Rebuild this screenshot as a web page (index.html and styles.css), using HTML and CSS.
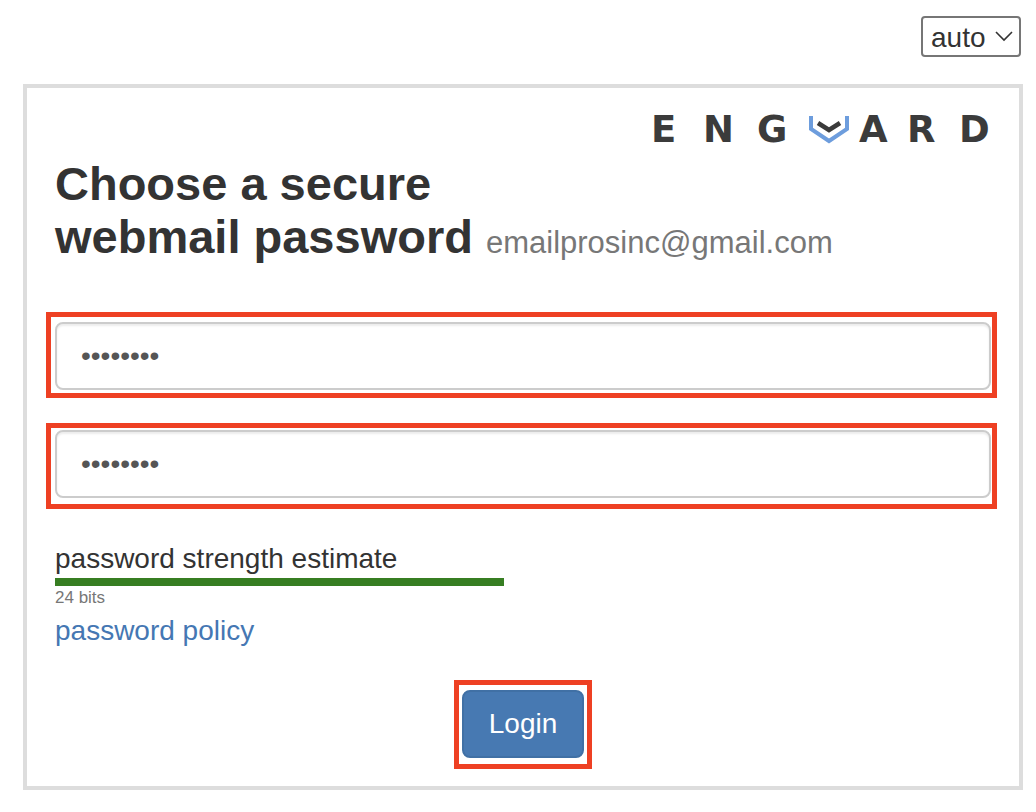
FILE: index.html
```html
<!DOCTYPE html>
<html lang="en">
<head>
<meta charset="utf-8">
<meta name="viewport" content="width=device-width, initial-scale=1">
<title>Choose a secure webmail password</title>
<link rel="stylesheet" href="styles.css">
</head>
<body>
<div class="topbar">
  <div class="picker">
    <select class="picker-select" aria-label="Language"><option>auto</option></select>
    <svg class="picker-arrow" width="18" height="12" viewBox="0 0 18 12" aria-hidden="true"><path d="M1 2 9 10 17 2" fill="none" stroke="#333" stroke-width="1.6"/></svg>
  </div>
</div>
<main class="panel">
  <div class="logo" role="img" aria-label="Engard">
    <span>E</span><span>N</span><span>G</span>
    <svg width="40" height="28" viewBox="0 0 40 28" aria-hidden="true">
      <path d="M2 0V13L20 25 38 13V0" fill="none" stroke="#6d9ddd" stroke-width="4"/>
      <path d="M9 7 20 14 31 7" fill="none" stroke="#3b3b3b" stroke-width="4.5"/>
    </svg>
    <span>A</span><span>R</span><span>D</span>
  </div>
  <h1 class="title">Choose a secure<br>webmail password <small class="account">emailprosinc@gmail.com</small></h1>
  <form class="form">
    <div class="mark mark-first"><input class="field" type="password" value="password" aria-label="Password"></div>
    <div class="mark mark-second"><input class="field" type="password" value="password" aria-label="Repeat password"></div>
    <div class="strength">
      <div class="strength-label">password strength estimate</div>
      <div class="strength-bar" style="width: 48%"></div>
      <div class="strength-bits">24 bits</div>
      <a class="policy" href="#">password policy</a>
    </div>
    <div class="mark mark-login"><button class="login" type="button">Login</button></div>
  </form>
</main>
</body>
</html>
```
FILE: styles.css
```css
* { box-sizing: border-box; }

body {
  margin: 0;
  padding: 16px 13px 22px 23px;
  background: #fff;
  color: #333;
  font: 28px/40px "Liberation Sans", Arial, sans-serif;
}

.topbar {
  display: flex;
  justify-content: flex-end;
  padding-right: 2px;
  margin-bottom: 27px;
}

.picker { position: relative; }

.picker-select {
  display: block;
  width: 100px;
  height: 41px;
  padding: 0 8px;
  border: 2px solid #767676;
  border-radius: 4px;
  background: #fff;
  color: #333;
  font: inherit;
  appearance: none;
}

.picker-arrow {
  position: absolute;
  top: 14px;
  right: 8px;
  pointer-events: none;
}

.panel {
  padding: 28px 28px 17px;
  border: 4px solid #ddd;
}

.logo {
  display: grid;
  grid-template-columns: 52px 54px 52px 50px 48px 52px 32px;
  justify-content: end;
  align-items: center;
  height: 28px;
  color: #3b3b3b;
  font: 700 37px/28px "DejaVu Sans", sans-serif;
}

.title {
  margin: 13px 0 49px;
  font-size: 47px;
  line-height: 53px;
  font-weight: 700;
}

.account {
  color: #777;
  font-size: 31px;
  line-height: 1;
  font-weight: 400;
}

.mark { border: 5px solid #ee4023; }

.mark-first,
.mark-second { margin: 0 -6px 25px -9px; }

.mark-first { padding: 5px 1px 3px 4px; }

.mark-second {
  padding: 2px 1px 6px 4px;
  margin-bottom: 31px;
}

.field {
  display: block;
  width: 100%;
  height: 68px;
  padding: 0 24px;
  border: 2px solid #ccc;
  border-radius: 8px;
  background: #fff;
  color: #555;
  font: inherit;
  box-shadow: inset 0 2px 2px rgba(0, 0, 0, 0.075);
}

.strength-label { line-height: 38px; }

.strength-bar {
  height: 8px;
  background: #377e22;
}

.strength-bits {
  color: #777;
  font-size: 17px;
  line-height: 24px;
}

.policy {
  display: block;
  width: fit-content;
  color: #4577b3;
  line-height: 42px;
  text-decoration: none;
}

.mark-login {
  width: fit-content;
  margin: 28px auto 0;
  padding: 5px 3px 6px;
}

.login {
  display: block;
  height: 68px;
  padding: 0 25px;
  border: 2px solid #4070a5;
  border-radius: 8px;
  background: #4779b2;
  color: #fff;
  font: inherit;
}
```
